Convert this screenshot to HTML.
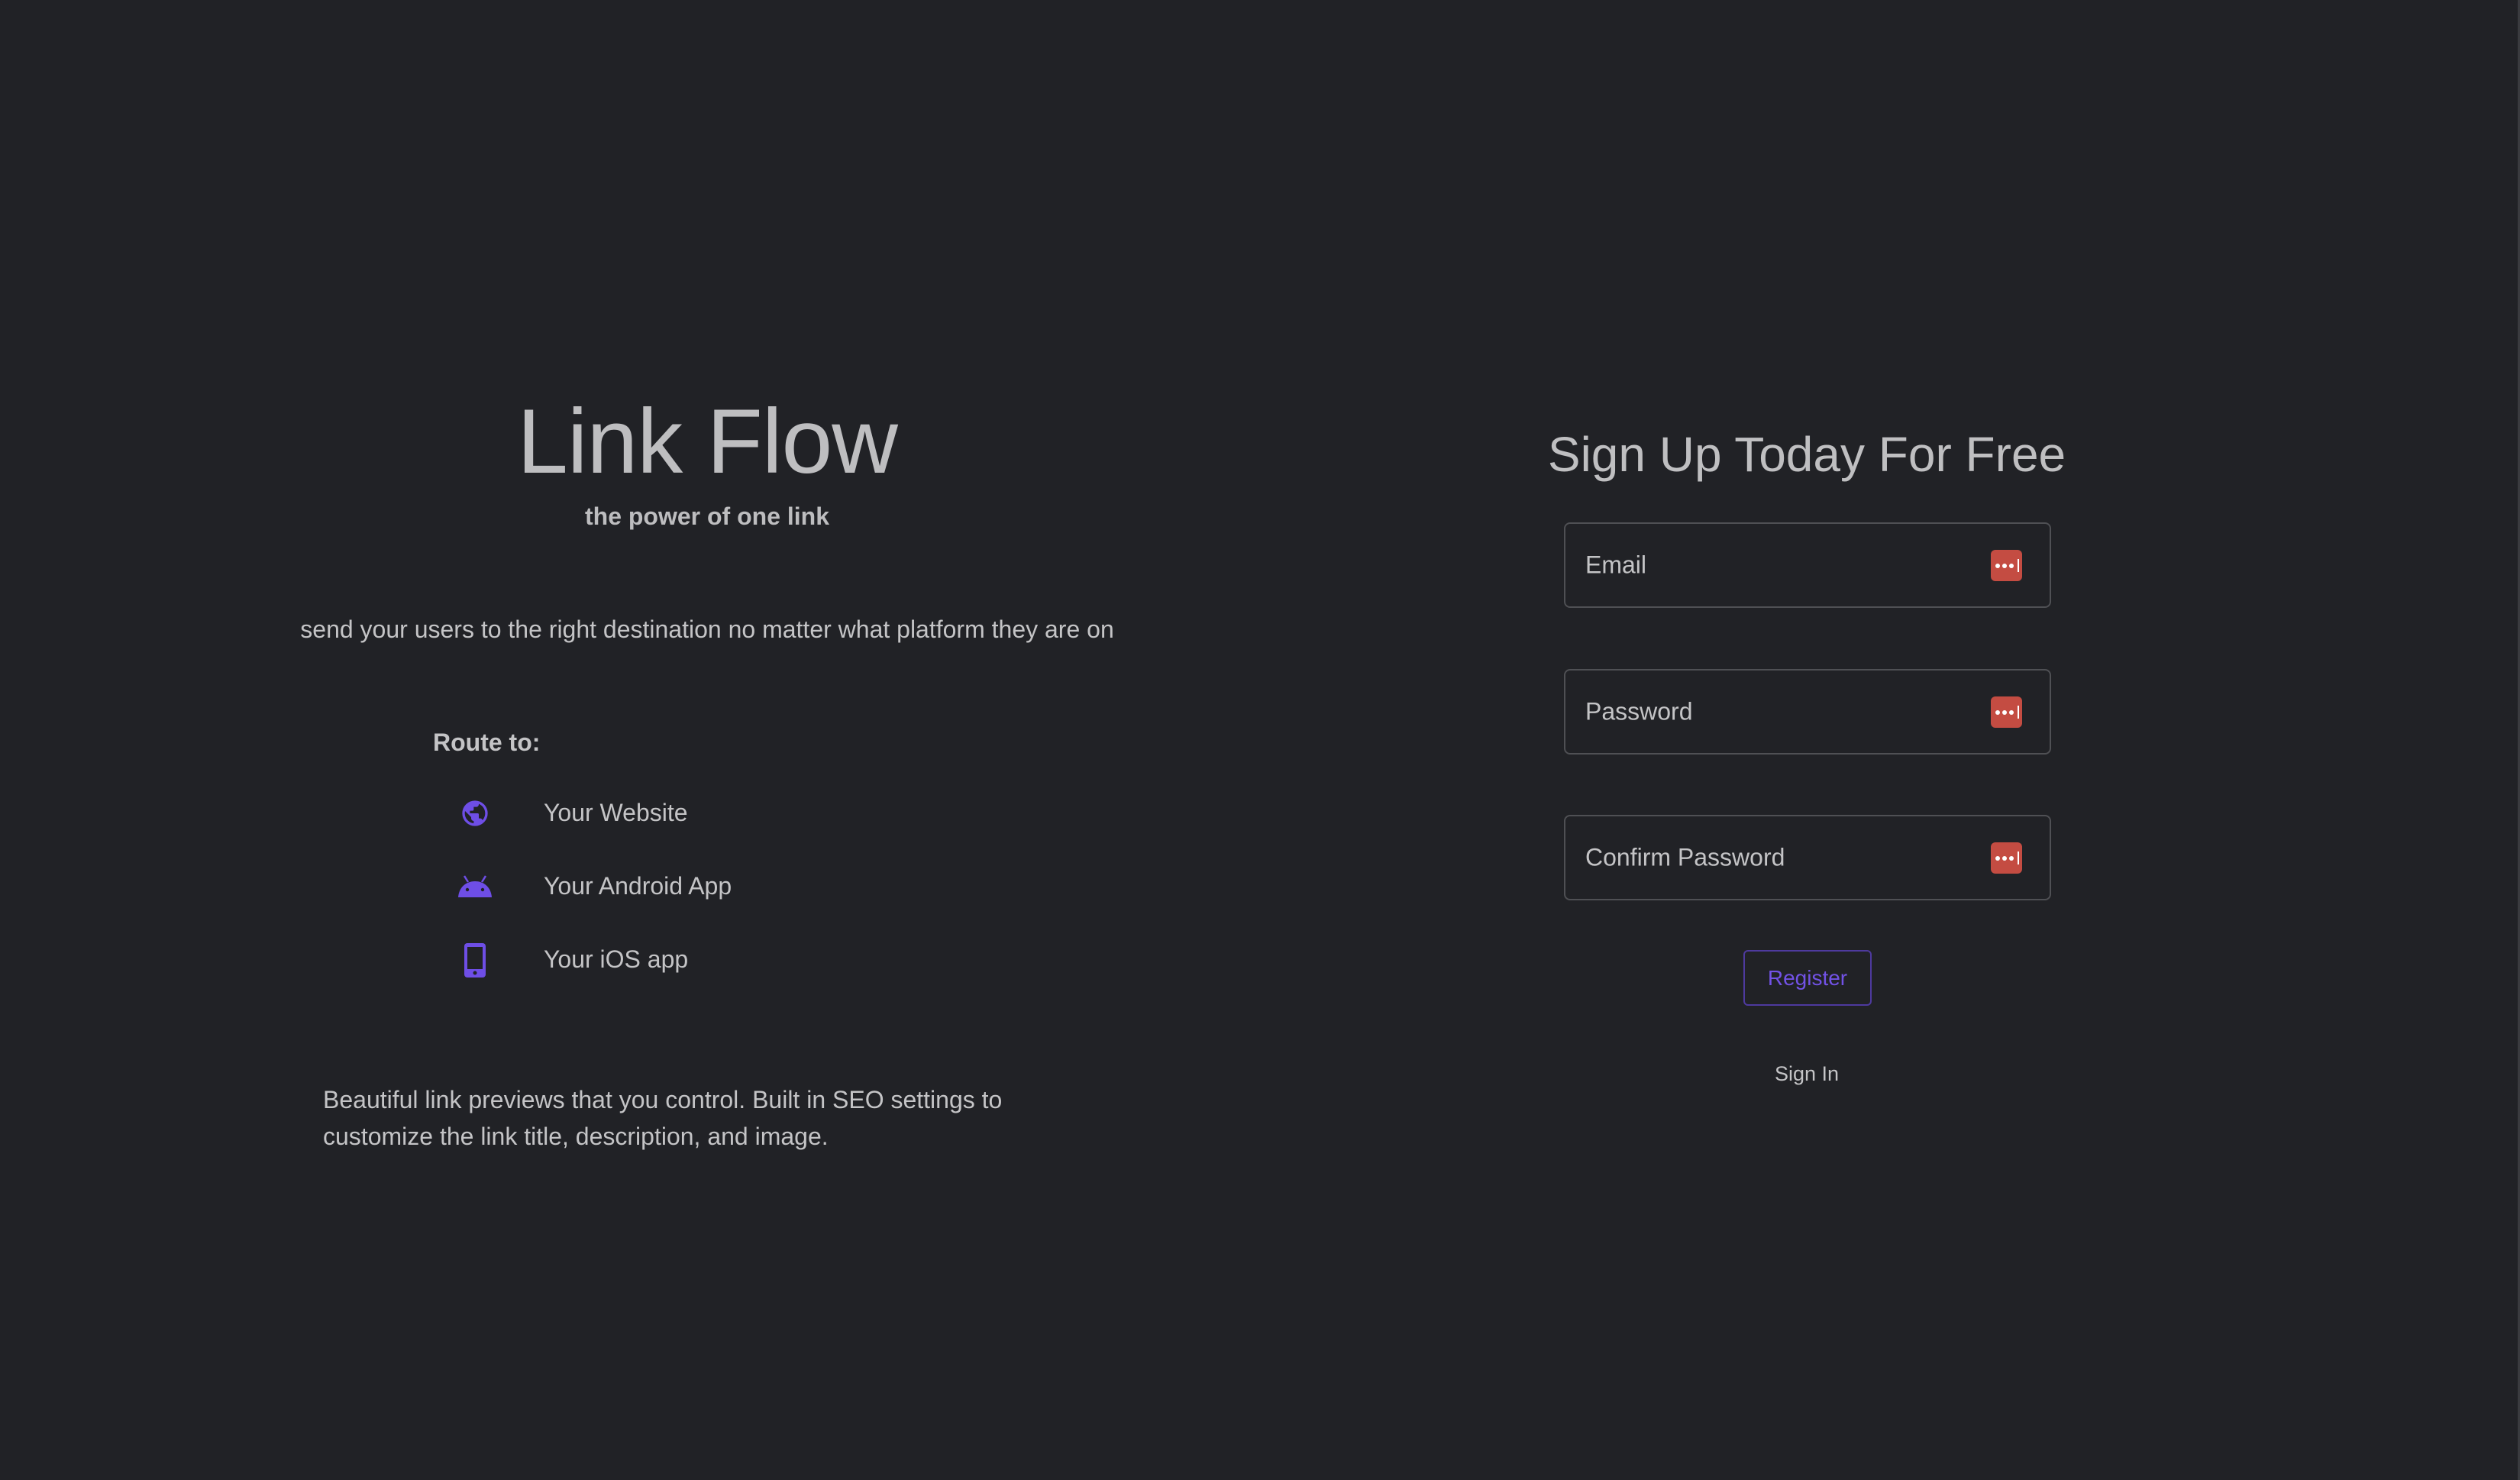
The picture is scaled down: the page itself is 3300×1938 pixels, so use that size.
<!DOCTYPE html>
<html><head><meta charset="utf-8">
<style>
html,body{margin:0;padding:0;}
body{width:3300px;height:1938px;background:#212226;position:relative;overflow:hidden;font-family:"Liberation Sans",sans-serif;color:#c4c4c6;}
.abs{position:absolute;white-space:nowrap;}
.edge{position:absolute;right:0;top:0;width:3px;height:1938px;background:#3a3b3f;}
.input{position:absolute;left:2048px;width:634px;height:108px;border:2px solid #4f5054;border-radius:8px;}
.input span{position:absolute;left:26px;top:50%;transform:translateY(-50%);font-size:32px;color:#c4c4c6;}
.key{position:absolute;left:557px;top:34px;width:41px;height:41px;background:#c44c42;border-radius:6px;}
.key i{position:absolute;top:18px;width:6px;height:6px;border-radius:50%;background:#fff;}
.key b{position:absolute;left:35px;top:12px;width:2px;height:17px;background:#fff;}
</style></head><body>
<div class="edge"></div>

<div class="abs" style="left:0;width:1852px;top:508px;text-align:center;font-size:120px;font-weight:300;color:#bebec0;letter-spacing:-1px;line-height:140px;">Link Flow</div>
<div class="abs" style="left:0;width:1852px;top:658px;text-align:center;font-size:32px;font-weight:bold;color:#bdbdbf;">the power of one link</div>
<div class="abs" style="left:0;width:1852px;top:806px;text-align:center;font-size:32px;">send your users to the right destination no matter what platform they are on</div>

<div class="abs" style="left:567px;top:954px;font-size:32px;font-weight:bold;">Route to:</div>

<svg class="abs" style="left:602px;top:1045px" width="40" height="40" viewBox="0 0 24 24"><path fill="#6e4ee6" d="M12 2a10 10 0 1 0 0 20 10 10 0 0 0 0-20zm-1 17.9A8 8 0 0 1 4 12c0-.6.1-1.2.2-1.8L9 15v1a2 2 0 0 0 2 2v1.9zm6.9-2.5A2 2 0 0 0 16 16h-1v-3a1 1 0 0 0-1-1H8v-2h2a1 1 0 0 0 1-1V7h2a2 2 0 0 0 2-2v-.4a8 8 0 0 1 2.9 12.8z"/></svg>
<div class="abs" style="left:712px;top:1046px;font-size:32px;">Your Website</div>

<svg class="abs" style="left:600px;top:1146px" width="44" height="30" viewBox="0 0 44 30"><path fill="#6e4ee6" d="M0 29 C1 16 10 8 22 8 C34 8 43 16 44 29 Z"/><path d="M8 1 L13 9 M36 1 L31 9" stroke="#6e4ee6" stroke-width="2.5"/><circle cx="12" cy="19" r="2.2" fill="#212226"/><circle cx="32" cy="19" r="2.2" fill="#212226"/></svg>
<div class="abs" style="left:712px;top:1142px;font-size:32px;">Your Android App</div>

<svg class="abs" style="left:608px;top:1235px" width="28" height="45" viewBox="0 0 28 45"><rect x="0" y="0" width="28" height="45" rx="4" fill="#6e4ee6"/><rect x="4" y="5" width="20" height="29" fill="#212226"/><circle cx="14" cy="39" r="2.5" fill="#212226"/></svg>
<div class="abs" style="left:712px;top:1238px;font-size:32px;">Your iOS app</div>

<div class="abs" style="left:423px;top:1416px;font-size:32px;line-height:48px;white-space:normal;width:1000px;">Beautiful link previews that you control. Built in SEO settings to<br>customize the link title, description, and image.</div>

<div class="abs" style="left:1900px;width:932px;top:558px;text-align:center;font-size:64px;color:#bfbfc1;">Sign Up Today For Free</div>

<div class="input" style="top:684px"><span>Email</span><div class="key"><i style="left:6px"></i><i style="left:15px"></i><i style="left:24px"></i><b></b></div></div>
<div class="input" style="top:876px"><span>Password</span><div class="key"><i style="left:6px"></i><i style="left:15px"></i><i style="left:24px"></i><b></b></div></div>
<div class="input" style="top:1067px"><span>Confirm Password</span><div class="key"><i style="left:6px"></i><i style="left:15px"></i><i style="left:24px"></i><b></b></div></div>

<div class="abs" style="left:2283px;top:1244px;width:164px;height:69px;border:2px solid #4e3a9e;border-radius:6px;text-align:center;line-height:69px;font-size:28px;color:#7252e6;">Register</div>
<div class="abs" style="left:1900px;width:932px;top:1391px;text-align:center;font-size:27px;">Sign In</div>
</body></html>
